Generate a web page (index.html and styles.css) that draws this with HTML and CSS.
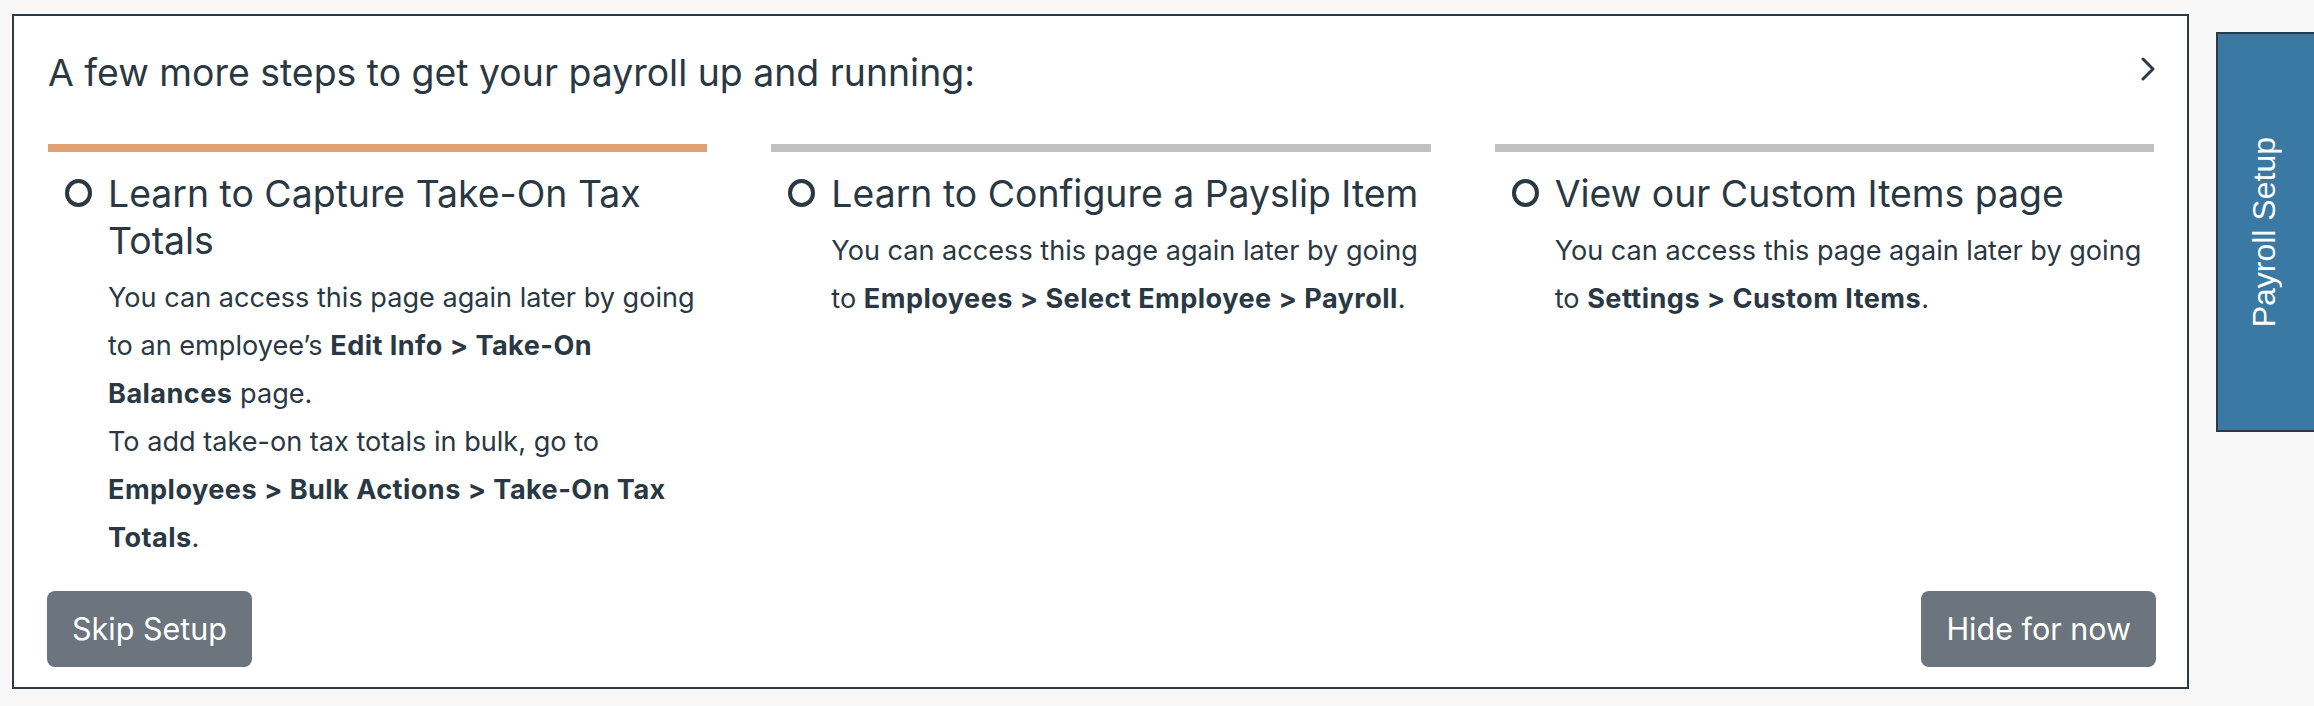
FILE: index.html
```html
<!DOCTYPE html>
<html>
<head>
<meta charset="utf-8">
<link rel="stylesheet" href="styles.css">
</head>
<body>
<div class="page">
  <section class="card">
    <header class="card-head">
      <h2 class="card-title">A few more steps to get your payroll up and running:</h2>
      <svg class="chevron" width="14" height="24" viewBox="0 0 14 24"><polyline points="2,2 12,12 2,22" fill="none" stroke="#2c3a47" stroke-width="3" stroke-linecap="round" stroke-linejoin="round"/></svg>
    </header>
    <div class="steps">
      <div class="step">
        <div class="bar bar-active"></div>
        <div class="step-row">
          <span class="ring"></span>
          <div class="step-text">
            <h3 class="step-title">Learn to Capture Take-On Tax Totals</h3>
            <p class="step-desc">You can access this page again later by going to an employee’s <b>Edit Info &gt; Take-On Balances</b> page.</p>
            <p class="step-desc">To add take-on tax totals in bulk, go to <b>Employees &gt; Bulk Actions &gt; Take-On Tax Totals</b>.</p>
          </div>
        </div>
      </div>
      <div class="step">
        <div class="bar"></div>
        <div class="step-row">
          <span class="ring"></span>
          <div class="step-text">
            <h3 class="step-title">Learn to Configure a Payslip Item</h3>
            <p class="step-desc">You can access this page again later by going to <b>Employees &gt; Select Employee &gt; Payroll</b>.</p>
          </div>
        </div>
      </div>
      <div class="step">
        <div class="bar"></div>
        <div class="step-row">
          <span class="ring"></span>
          <div class="step-text">
            <h3 class="step-title">View our Custom Items page</h3>
            <p class="step-desc">You can access this page again later by going to <b>Settings &gt; Custom Items</b>.</p>
          </div>
        </div>
      </div>
    </div>
    <footer class="card-foot">
      <button class="btn">Skip Setup</button>
      <button class="btn">Hide for now</button>
    </footer>
  </section>
  <aside class="side-tab"><span class="side-tab-text">Payroll Setup</span></aside>
</div>
</body>
</html>
```
FILE: styles.css
```css
html, body {
  margin: 0;
  padding: 0;
}
body {
  background: #f8f8f8;
  overflow: hidden;
  width: 2314px;
  height: 706px;
  font-family: "Inter", "Liberation Sans", sans-serif;
  color: #2a3844;
}
.page {
  display: flex;
  align-items: flex-start;
  padding: 14px 0 0 12px;
}
.card {
  box-sizing: border-box;
  width: 2177px;
  height: 675px;
  flex: none;
  background: #fff;
  border: 2px solid #2b3a45;
  padding: 0 33px 20px 34px;
  display: flex;
  flex-direction: column;
}
.card-head {
  display: flex;
  justify-content: space-between;
  align-items: flex-start;
  padding-top: 33px;
}
.card-title {
  margin: 0;
  font-size: 37.4px;
  line-height: 48px;
  font-weight: 400;
  color: #2a3844;
}
.chevron {
  display: block;
  margin-top: 8px;
  margin-right: -1px;
}
.steps {
  display: grid;
  grid-template-columns: repeat(3, 1fr);
  column-gap: 64px;
  margin-top: 47px;
}
.bar {
  height: 8px;
  background: #c0c0c0;
}
.bar-active {
  background: #e0a074;
}
.step-row {
  display: flex;
  align-items: flex-start;
  padding-left: 17px;
  margin-top: 18px;
}
.ring {
  flex: none;
  box-sizing: border-box;
  width: 27px;
  height: 28px;
  border: 4px solid #2a3844;
  border-radius: 50%;
  margin-top: 9px;
  margin-right: 16px;
}
.step-text {
  flex: 1;
  min-width: 0;
}
.step-title {
  margin: 0 0 10px;
  font-size: 37.4px;
  line-height: 47px;
  font-weight: 400;
}
.step-desc {
  margin: 0;
  font-size: 27.1px;
  line-height: 48px;
}
.step-desc b {
  font-weight: 700;
  letter-spacing: 0.45px;
}
.card-foot {
  margin-top: auto;
  display: flex;
  justify-content: space-between;
  margin-left: -1px;
  margin-right: -2px;
}
.btn {
  height: 76px;
  padding: 0 25px;
  border: none;
  border-radius: 8px;
  background: #6c757d;
  color: #fff;
  font-family: "Inter", "Liberation Sans", sans-serif;
  font-size: 30.5px;
  line-height: 48px;
}
.side-tab {
  flex: none;
  box-sizing: border-box;
  width: 100px;
  height: 400px;
  margin: 18px 0 0 27px;
  background: #3979a4;
  border: 2px solid #2b3a45;
  display: flex;
  align-items: center;
  justify-content: center;
}
.side-tab-text {
  writing-mode: vertical-rl;
  transform: rotate(180deg);
  color: #fff;
  font-family: "Liberation Sans", "Helvetica", sans-serif;
  font-size: 32px;
  margin-left: -4px;
}
```
